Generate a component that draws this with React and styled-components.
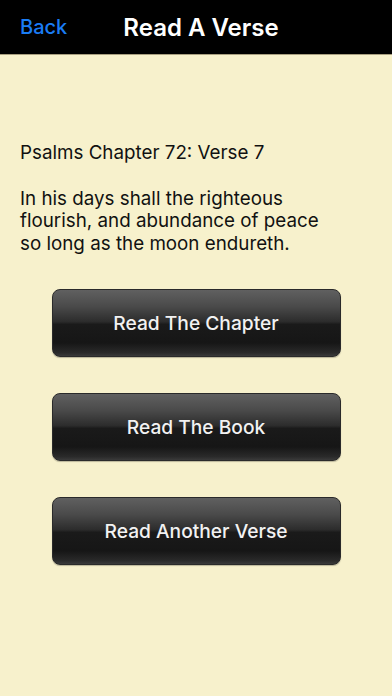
import React from 'react';
import styled, { createGlobalStyle } from 'styled-components';

const GlobalStyle = createGlobalStyle`
  html, body {
    margin: 0;
    padding: 0;
    background: #f7f1cc;
  }
  body {
    font-family: Inter, "Liberation Sans", sans-serif;
  }
`;

const Screen = styled.div`
  width: 392px;
  height: 696px;
  background: #f7f1cc;
  display: flex;
  flex-direction: column;
`;

const NavBar = styled.div`
  height: 54px;
  background: #000;
  border-bottom: 1px solid #a89f80;
  display: flex;
  align-items: center;
  position: relative;
`;

const BackLink = styled.span`
  color: #1a7cf4;
  font-size: 20px;
  font-weight: 500;
  margin-left: 20px;
`;

const Title = styled.h1`
  position: absolute;
  left: 10px;
  right: 0;
  margin: 0;
  text-align: center;
  color: #fff;
  font-size: 24px;
  font-weight: 600;
  pointer-events: none;
`;

const Content = styled.div`
  padding: 87px 20px 0;
  color: #111;
  font-size: 18.8px;
  line-height: 22.5px;
`;

const Paragraph = styled.p`
  margin: 0 0 23px;
  width: 320px;
`;

const Buttons = styled.div`
  display: flex;
  flex-direction: column;
  align-items: center;
  gap: 36px;
  margin-top: 11px;
`;

const ActionButton = styled.button`
  width: 289px;
  height: 68px;
  border: 1px solid #2a2a2a;
  border-radius: 8px;
  color: #f2f2f2;
  font-family: inherit;
  font-size: 19.2px;
  font-weight: 500;
  background: linear-gradient(
    to bottom,
    #606060 0%,
    #4a4a4a 25%,
    #2c2c2c 48%,
    #1a1a1a 52%,
    #161616 80%,
    #2a2a2a 95%,
    #3a3a3a 100%
  );
  box-shadow: 0 1px 1px rgba(0, 0, 0, 0.25);
`;

export default function App() {
  return (
    <>
      <GlobalStyle />
      <Screen>
        <NavBar>
          <BackLink>Back</BackLink>
          <Title>Read A Verse</Title>
        </NavBar>
        <Content>
          <Paragraph>Psalms Chapter 72: Verse 7</Paragraph>
          <Paragraph>
            In his days shall the righteous flourish, and abundance of peace so
            long as the moon endureth.
          </Paragraph>
        </Content>
        <Buttons>
          <ActionButton>Read The Chapter</ActionButton>
          <ActionButton>Read The Book</ActionButton>
          <ActionButton>Read Another Verse</ActionButton>
        </Buttons>
      </Screen>
    </>
  );
}
